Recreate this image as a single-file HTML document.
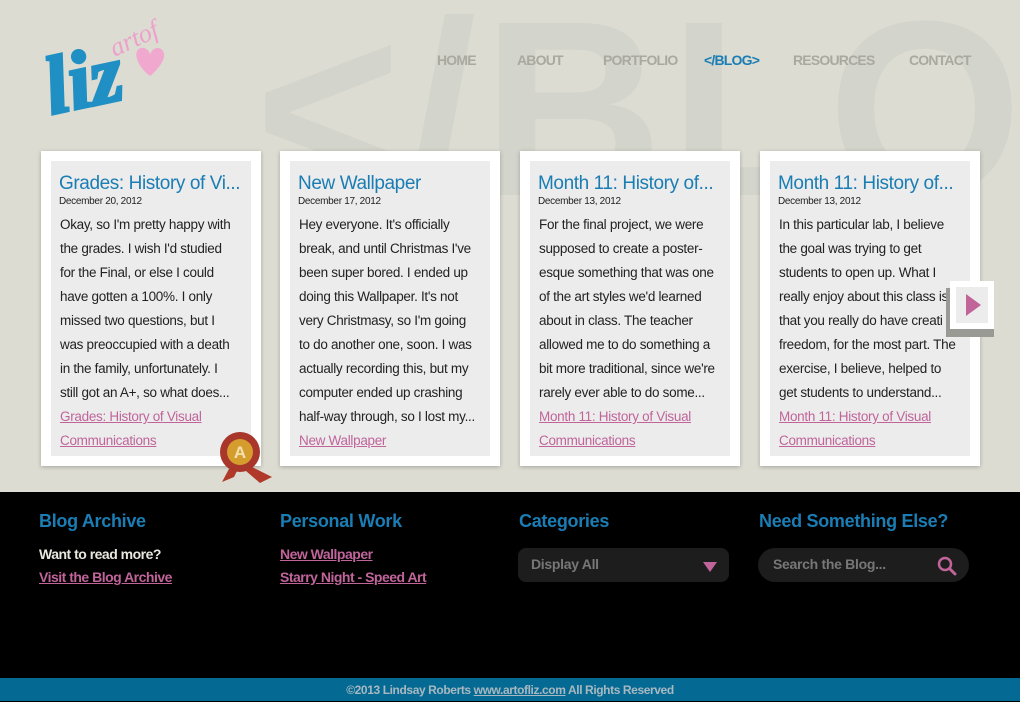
<!DOCTYPE html>
<html><head><meta charset="utf-8"><style>
*{margin:0;padding:0;box-sizing:border-box}
body{width:1020px;height:701px;overflow:hidden;font-family:"Liberation Sans",sans-serif;background:#000;position:relative}
.top{position:absolute;left:0;top:0;width:1020px;height:492px;background:#dcdcd2;overflow:hidden}
.wm{position:absolute;left:255px;top:-35px;font-size:250px;font-weight:bold;color:#d3d4cb;letter-spacing:6px;white-space:nowrap}
.nav{position:absolute;top:52px;font-size:14px;font-weight:bold;color:#a9a99f;letter-spacing:-0.8px}
.card{position:absolute;top:151px;width:220px;height:315px;background:#fff;box-shadow:0 1px 4px rgba(0,0,0,.25);padding:10px}
.in{background:#ececec;height:295px;padding:12px 8px 0 8px;overflow:hidden}
.t{font-size:19px;color:#1a7db4;white-space:nowrap;overflow:hidden;letter-spacing:-0.4px;line-height:22px}
.d{font-size:10px;color:#222;margin:1px 0 6px 0;letter-spacing:-0.3px}
.b{font-size:13.5px;color:#222;line-height:24px;padding-left:1px;letter-spacing:-0.3px;white-space:nowrap}
.l{color:#c0649a;text-decoration:underline}
.h{position:absolute;top:511px;font-size:18px;font-weight:bold;color:#1a7db4;letter-spacing:-0.3px}
.f{position:absolute;font-size:14px;font-weight:bold;letter-spacing:-0.5px}
.pk{color:#c0649a;text-decoration:underline}
.box{position:absolute;top:548px;height:34px;background:#1d1d1d;border-radius:8px;color:#777;font-size:14px;font-weight:bold;padding:8px 13px;letter-spacing:-0.3px}
.bar{position:absolute;left:0;top:678px;width:1020px;height:23px;background:#056a93;color:#a8b8c0;font-size:12px;font-weight:bold;text-align:center;line-height:24px;letter-spacing:-0.4px}
</style></head><body>
<div class="top">
<div class="wm">&lt;/BLOG</div>
<svg style="position:absolute;left:38px;top:8px" width="135" height="108" viewBox="0 0 135 108">
<text x="6" y="100" font-family="Liberation Serif" font-style="italic" font-weight="bold" font-size="82" fill="#1f8fc4" stroke="#1f8fc4" stroke-width="3" transform="rotate(-12 40 70)">liz</text>
<text x="72" y="42" font-family="Liberation Serif" font-style="italic" font-size="26" fill="#ee9fcb" transform="rotate(-25 90 35)">artof</text>
<path d="M112 68 C95 55 95 38 106 40 C110 41 112 45 112 47 C113 42 118 38 123 41 C131 47 122 60 112 68Z" fill="#f0a8cf"/>
</svg>
<div class="nav" style="left:437px">HOME</div>
<div class="nav" style="left:517px">ABOUT</div>
<div class="nav" style="left:603px">PORTFOLIO</div>
<div class="nav" style="left:704px;color:#1a7db4">&lt;/BLOG&gt;</div>
<div class="nav" style="left:793px">RESOURCES</div>
<div class="nav" style="left:909px">CONTACT</div>

<div class="card" style="left:41px"><div class="in"><div class="t">Grades: History of Vi...</div><div class="d">December 20, 2012</div><div class="b">Okay, so I'm pretty happy with<br>the grades. I wish I'd studied<br>for the Final, or else I could<br>have gotten a 100%. I only<br>missed two questions, but I<br>was preoccupied with a death<br>in the family, unfortunately. I<br>still got an A+, so what does...<br><span class="l">Grades: History of Visual </span><br><span class="l">Communications</span></div></div></div>
<div class="card" style="left:280px"><div class="in"><div class="t">New Wallpaper</div><div class="d">December 17, 2012</div><div class="b">Hey everyone. It's officially<br>break, and until Christmas I've<br>been super bored. I ended up<br>doing this Wallpaper. It's not<br>very Christmasy, so I'm going<br>to do another one, soon. I was<br>actually recording this, but my<br>computer ended up crashing<br>half-way through, so I lost my...<br><span class="l">New Wallpaper</span></div></div></div>
<div class="card" style="left:520px"><div class="in"><div class="t">Month 11: History of...</div><div class="d">December 13, 2012</div><div class="b">For the final project, we were<br>supposed to create a poster-<br>esque something that was one<br>of the art styles we'd learned<br>about in class. The teacher<br>allowed me to do something a<br>bit more traditional, since we're<br>rarely ever able to do some...<br><span class="l">Month 11: History of Visual</span><br><span class="l">Communications</span></div></div></div>
<div class="card" style="left:760px"><div class="in"><div class="t">Month 11: History of...</div><div class="d">December 13, 2012</div><div class="b">In this particular lab, I believe<br>the goal was trying to get<br>students to open up. What I<br>really enjoy about this class is<br>that you really do have creati<br>freedom, for the most part. The<br>exercise, I believe, helped to<br>get students to understand...<br><span class="l">Month 11: History of Visual</span><br><span class="l">Communications</span></div></div></div>
<svg style="position:absolute;left:216px;top:427px" width="60" height="60" viewBox="0 0 60 60"><path d="M14 40 L6 55 L18 50 L22 42Z M36 40 L56 50 L44 56 L30 44Z" fill="#b0392a"/><circle cx="24" cy="25" r="20" fill="#a8362a"/><circle cx="24" cy="25" r="13" fill="#d59d2e"/><text x="24" y="31" text-anchor="middle" font-size="17" font-weight="bold" fill="#f3e2b0">A</text></svg>
<div style="position:absolute;left:946px;top:288px;width:48px;height:49px;background:#9a9a94;"></div>
<div style="position:absolute;left:950px;top:281px;width:44px;height:48px;background:#fff;padding:6px"><div style="background:#ececec;width:32px;height:36px;position:relative"><div style="position:absolute;left:10px;top:7px;border-left:15px solid #c0649a;border-top:11px solid transparent;border-bottom:11px solid transparent"></div></div></div>
</div>

<div class="h" style="left:39px">Blog Archive</div>
<div class="h" style="left:280px">Personal Work</div>
<div class="h" style="left:519px">Categories</div>
<div class="h" style="left:759px">Need Something Else?</div>
<div class="f" style="left:39px;top:546px;color:#e8e8e0">Want to read more?</div>
<div class="f pk" style="left:39px;top:569px">Visit the Blog Archive</div>
<div class="f pk" style="left:280px;top:546px">New Wallpaper</div>
<div class="f pk" style="left:280px;top:569px">Starry Night - Speed Art</div>
<div class="box" style="left:518px;width:211px">Display All<div style="position:absolute;right:12px;top:14px;border-top:10px solid #c0649a;border-left:7px solid transparent;border-right:7px solid transparent"></div></div>
<div class="box" style="left:758px;width:211px;border-radius:17px;padding-left:15px">Search the Blog...<svg style="position:absolute;right:12px;top:8px" width="20" height="20" viewBox="0 0 20 20"><circle cx="8" cy="8" r="6" fill="none" stroke="#c0649a" stroke-width="2.5"/><path d="M12.5 12.5 L18 18" stroke="#c0649a" stroke-width="3" stroke-linecap="round"/></svg></div>
<div class="bar">©2013 Lindsay Roberts <u>www.artofliz.com</u> All Rights Reserved</div>
</body></html>
